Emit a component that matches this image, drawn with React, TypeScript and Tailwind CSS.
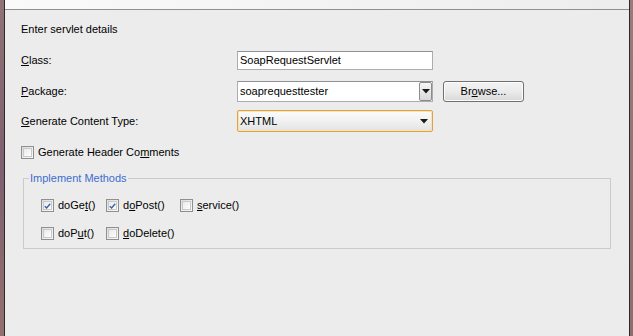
import React from "react";

// Mnemonic letter (underlined) inside a label
const M = ({ children }: { children: React.ReactNode }) => (
  <span className="underline underline-offset-[1px]">{children}</span>
);

const Check = ({ checked }: { checked?: boolean }) => (
  <div className="w-[13px] h-[13px] shrink-0 border border-[#8e8f8f] bg-gradient-to-br from-[#dcdcdc] to-[#fbfbfb] p-[1px]">
    <div className="w-full h-full border border-[#c9c9c9] bg-gradient-to-br from-[#e9e9e9] to-[#ffffff] flex items-center justify-center">
      {checked && (
        <svg width="9" height="8" viewBox="0 0 9 8">
          <path
            d="M1 4.2 L3.4 6.6 L8 1.2"
            fill="none"
            stroke="#3b5fa8"
            strokeWidth="1.8"
          />
        </svg>
      )}
    </div>
  </div>
);

const CheckItem = ({
  checked,
  width,
  children,
}: {
  checked?: boolean;
  width?: string;
  children: React.ReactNode;
}) => (
  <div className={`flex items-center gap-[4px] ${width ?? ""}`}>
    <Check checked={checked} />
    <span className="leading-[13px]">{children}</span>
  </div>
);

const Arrow = () => (
  <svg width="8" height="5" viewBox="0 0 8 5">
    <path d="M0 0 H8 L4 4.5 Z" fill="#1a1a1a" />
  </svg>
);

export default function App() {
  return (
    <div
      className="w-[633px] h-[336px] flex bg-[#ececec] text-black text-[11px] overflow-hidden"
      style={{ fontFamily: '"Liberation Sans", Arial, sans-serif' }}
    >
      {/* window frame left */}
      <div className="w-[4px] bg-gradient-to-b from-[#8f7376] via-[#7d6170] to-[#94706f]" />
      <div className="w-[1px] bg-[#2f2929]" />

      <div className="flex-1 flex flex-col">
        {/* header strip */}
        <div className="h-[9px] bg-gradient-to-r from-[#fafafa] to-[#ededed]" />
        <div className="h-[1px] bg-[#8f8f8f]" />

        <div className="flex flex-col pt-[13px] pl-[16px] pr-[18px]">
          <div className="leading-[13px] h-[13px]">Enter servlet details</div>

          {/* Class */}
          <div className="flex items-center mt-[15px] h-[19px]">
            <div className="w-[216px]">
              <M>C</M>lass:
            </div>
            <div className="w-[196px] h-[19px] border border-[#abadb3] border-t-[#8d9299] bg-white flex items-center pl-[2px]">
              SoapRequestServlet
            </div>
          </div>

          {/* Package */}
          <div className="flex items-center mt-[11px] h-[21px]">
            <div className="w-[216px]">
              <M>P</M>ackage:
            </div>
            <div className="w-[196px] h-[21px] border border-[#abadb3] border-t-[#8d9299] bg-white flex items-center">
              <span className="flex-1 pl-[2px]">soaprequesttester</span>
              <div className="w-[13px] h-[19px] border border-[#8c8c8c] rounded-[2px] bg-gradient-to-b from-[#f6f6f6] to-[#d9d9d9] flex items-center justify-center">
                <Arrow />
              </div>
            </div>
            <button className="ml-[10px] w-[81px] h-[21px] border border-[#707070] rounded-[3px] bg-gradient-to-b from-[#f3f3f3] via-[#ebebeb] to-[#d8d8d8] shadow-[inset_0_0_0_1px_#fcfcfc] flex items-center justify-center">
              Br<M>o</M>wse...
            </button>
          </div>

          {/* Content type */}
          <div className="flex items-center mt-[8px] h-[22px]">
            <div className="w-[216px]">
              <M>G</M>enerate Content Type:
            </div>
            <div className="w-[196px] h-[22px] border border-[#dca24a] rounded-[2px] shadow-[inset_0_0_0_1px_#fbe3b0] bg-gradient-to-b from-[#fbfbfb] via-[#f1f1f1] to-[#e3e3e3] flex items-center">
              <span className="flex-1 pl-[2px]">XHTML</span>
              <div className="w-[13px] flex items-center justify-center mr-[2px]">
                <Arrow />
              </div>
            </div>
          </div>

          {/* header comments */}
          <div className="mt-[14px]">
            <CheckItem>
              Generate Header Co<M>m</M>ments
            </CheckItem>
          </div>

          {/* Implement methods */}
          <fieldset className="mt-[13px] ml-[2px] border border-[#cbcbcb] pb-[8px]">
            <legend className="ml-[5px] px-[1px] leading-[13px] text-[#3c6dd0]">
              Implement Methods
            </legend>
            <div className="pl-[17px]">
              <div className="flex mt-[14px]">
                <CheckItem checked width="w-[65px]">
                  doGe<M>t</M>()
                </CheckItem>
                <CheckItem checked width="w-[74px]">
                  d<M>o</M>Post()
                </CheckItem>
                <CheckItem>
                  <M>s</M>ervice()
                </CheckItem>
              </div>
              <div className="flex mt-[15px]">
                <CheckItem width="w-[65px]">
                  doP<M>u</M>t()
                </CheckItem>
                <CheckItem>
                  <M>d</M>oDelete()
                </CheckItem>
              </div>
            </div>
          </fieldset>
        </div>
      </div>

      {/* window frame right */}
      <div className="w-[1px] bg-[#2f2929]" />
      <div className="w-[3px] bg-gradient-to-b from-[#9a7a7c] to-[#8d6e6e]" />
    </div>
  );
}
